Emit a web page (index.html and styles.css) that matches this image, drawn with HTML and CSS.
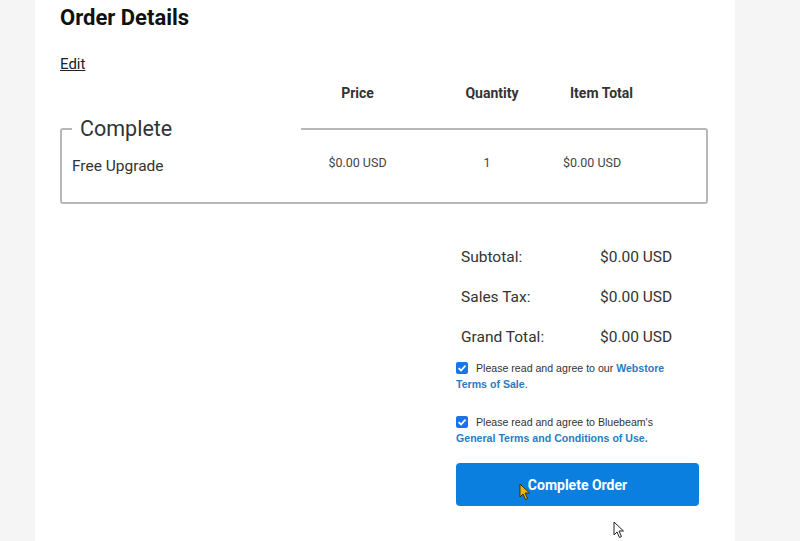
FILE: index.html
```html
<!DOCTYPE html>
<html lang="en">
<head>
<meta charset="utf-8">
<title>Order Details</title>
<link rel="stylesheet" href="styles.css">
</head>
<body>
<div class="panel">
  <h1 class="title">Order Details</h1>
  <a class="edit" href="#">Edit</a>
  <div class="head">
    <span></span>
    <span class="c-price">Price</span>
    <span class="c-qty">Quantity</span>
    <span class="c-total">Item Total</span>
  </div>
  <fieldset class="group">
    <legend class="legend">Complete</legend>
    <div class="row">
      <span class="name">Free Upgrade</span>
      <span class="c-price">$0.00 USD</span>
      <span class="c-qty">1</span>
      <span class="c-total">$0.00 USD</span>
    </div>
  </fieldset>
  <div class="side">
    <div class="sum">
      <div class="sum-row"><span>Subtotal:</span><span>$0.00 USD</span></div>
      <div class="sum-row"><span>Sales Tax:</span><span>$0.00 USD</span></div>
      <div class="sum-row"><span>Grand Total:</span><span>$0.00 USD</span></div>
    </div>
    <label class="agree"><span class="box"><svg viewBox="0 0 12 12" width="12" height="12"><rect width="12" height="12" rx="2" fill="#1a73e8"/><path d="M2.6 6.2 L5 8.5 L9.5 3.6" fill="none" stroke="#fff" stroke-width="1.8"/></svg></span>Please read and agree to our <a href="#">Webstore Terms of Sale</a>.</label>
    <label class="agree second"><span class="box"><svg viewBox="0 0 12 12" width="12" height="12"><rect width="12" height="12" rx="2" fill="#1a73e8"/><path d="M2.6 6.2 L5 8.5 L9.5 3.6" fill="none" stroke="#fff" stroke-width="1.8"/></svg></span>Please read and agree to Bluebeam's <a href="#">General Terms and Conditions of Use.</a></label>
    <button class="btn">Complete Order</button>
  </div>
  <svg class="cur cur-yellow" viewBox="0 0 12 18" width="12" height="18"><path d="M1 1 L1 14 L4 11 L6.5 16.5 L8.5 15.5 L6 10 L10.5 10 Z" fill="#f2b50f" stroke="#3a3000" stroke-width="1"/></svg>
  <svg class="cur cur-white" viewBox="0 0 12 18" width="12" height="18"><path d="M1 1 L1 14 L4 11 L6.5 16.5 L8.5 15.5 L6 10 L10.5 10 Z" fill="#fff" stroke="#222" stroke-width="1"/></svg>
</div>
</body>
</html>
```

FILE: styles.css
```css
html, body {
  margin: 0;
  padding: 0;
}
body {
  background: #f5f5f5;
  font-family: Roboto, "Liberation Sans", Arial, sans-serif;
  color: #333;
}
.panel {
  position: relative;
  margin-left: 35px;
  width: 700px;
  height: 541px;
  box-sizing: border-box;
  background: #fff;
  padding: 4px 0 0 25px;
}
.title {
  margin: 0;
  font-size: 22px;
  line-height: 28px;
  font-weight: 700;
  color: #111;
}
.edit {
  display: inline-block;
  margin-top: 23px;
  font-size: 15px;
  line-height: 18px;
  color: #222;
  text-decoration: underline;
}
.head {
  display: grid;
  grid-template-columns: 240px 115px 154px 80px;
  margin-top: 11px;
  font-size: 14px;
  font-weight: 700;
  line-height: 18px;
  color: #333;
}
.head .c-price, .head .c-qty { text-align: center; }
.head .c-total { padding-left: 1px; }
.group {
  margin: 14px 0 0 0;
  width: 648px;
  box-sizing: border-box;
  border: 2px solid #b7b7b7;
  border-radius: 3px;
  padding: 0 0 23px 10px;
  min-inline-size: 0;
}
.legend {
  width: 229px;
  box-sizing: border-box;
  padding: 0 0 0 8px;
  font-size: 21.5px;
  line-height: 26px;
  color: #333;
}
.row {
  display: grid;
  grid-template-columns: 228px 115px 148px 100px;
  align-items: center;
  margin-top: 11px;
  line-height: 20px;
}
.row .name { font-size: 15.5px; color: #333; }
.row .c-price, .row .c-qty, .row .c-total {
  font-size: 12.5px;
  color: #444;
  margin-bottom: 6px;
}
.row .c-price, .row .c-qty { text-align: center; }
.row .c-qty { padding-right: 4px; }
.side {
  margin: 36px 0 0 396px;
  width: 243px;
}
.sum {
  padding-top: 7px;
}
.sum-row {
  display: grid;
  grid-template-columns: 139px auto;
  padding-left: 5px;
  font-size: 15.5px;
  line-height: 20px;
  height: 40px;
  color: #333;
}
.agree {
  display: block;
  width: 215px;
  font-family: "Liberation Sans", Arial, sans-serif;
  font-size: 10.6px;
  line-height: 15.5px;
  color: #333;
  margin-top: -6px;
}
.agree.second { margin-top: 23px; }
.box {
  display: inline-block;
  width: 12px;
  height: 12px;
  vertical-align: -2px;
  margin-right: 8px;
}
.box svg { display: block; }
.agree a {
  color: #2a7cc0;
  font-weight: 700;
  text-decoration: none;
}
.btn {
  display: block;
  width: 243px;
  height: 43px;
  margin-top: 17px;
  border: 0;
  border-radius: 4px;
  background: #0a7fe0;
  color: #fff;
  font-family: Roboto, "Liberation Sans", Arial, sans-serif;
  font-size: 14px;
  font-weight: 700;
}
.cur {
  position: absolute;
}
.cur-yellow { left: 484px; top: 483px; }
.cur-white { left: 578px; top: 521px; }
```
